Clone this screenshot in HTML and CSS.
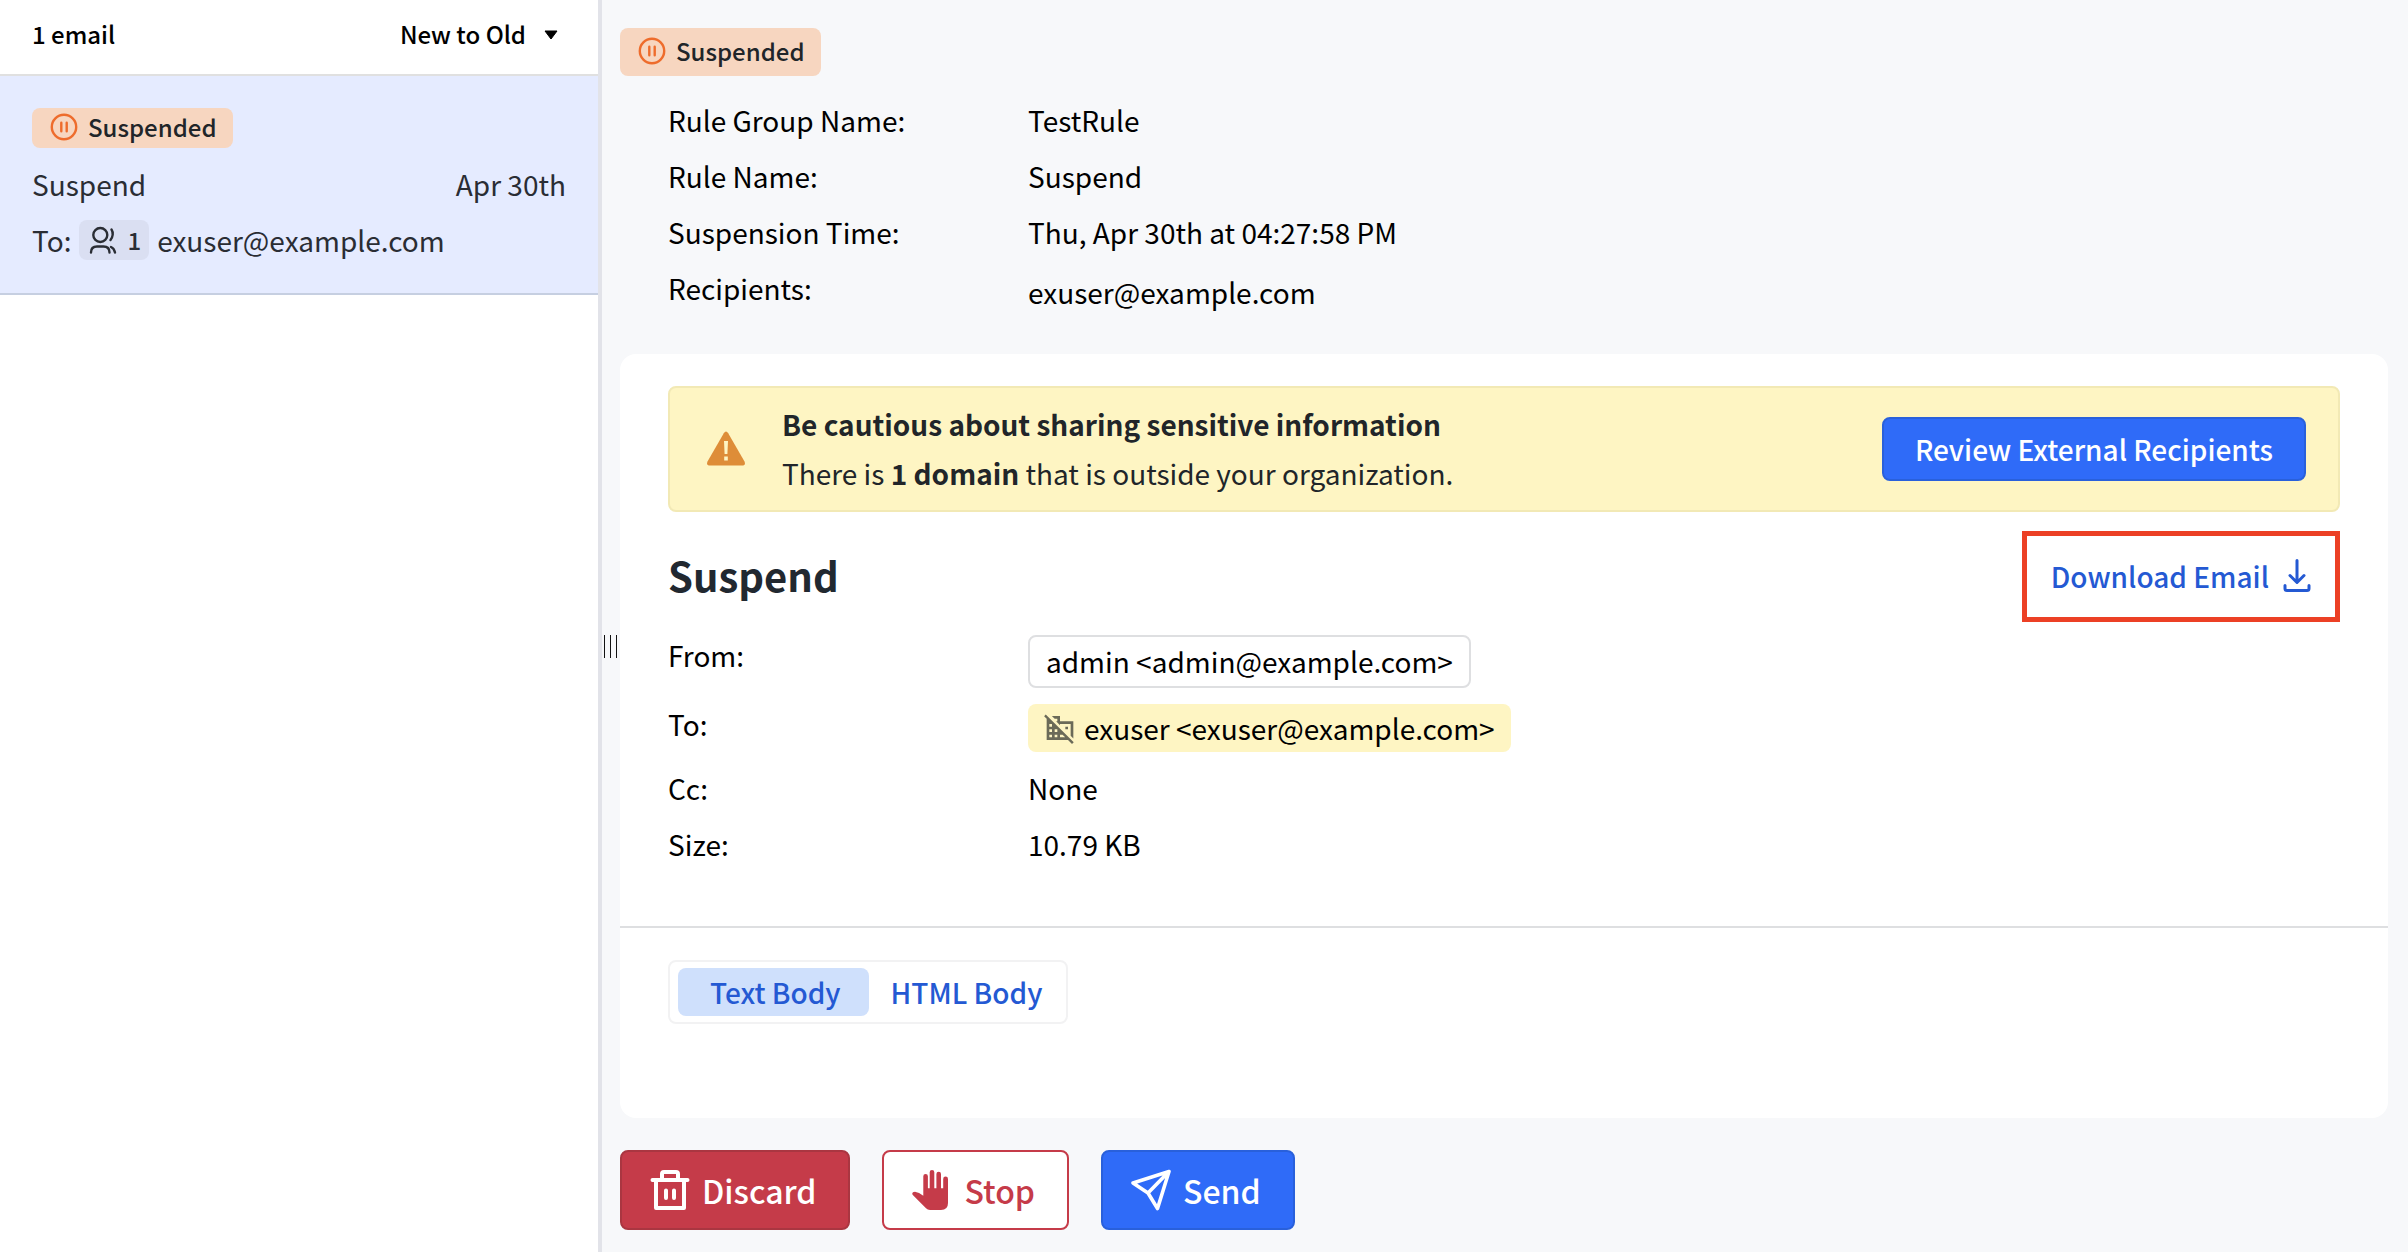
FILE: index.html
```html
<!DOCTYPE html>
<html lang="en">
<head>
<meta charset="utf-8">
<title>Suspended Emails</title>
<link rel="stylesheet" href="styles.css">
</head>
<body>

<div class="layout">
    <aside class="sidebar">
        <div class="listHeader">
            <span>1 email</span>
            <button class="sortButton" type="button">New to Old
                <svg width="14" height="14" viewBox="0 0 14 14"><path d="M1 4h12L7 12z" fill="currentColor" stroke="currentColor" stroke-linejoin="round"/></svg>
            </button>
        </div>
        <div class="emailItem">
            <div class="badge">
                <svg width="28" height="28" viewBox="0 0 28 28" fill="none" stroke="#ee6c2c" stroke-width="2.4" stroke-linecap="round"><circle cx="14" cy="14" r="12.2"/><path d="M11.300 9.800v8.400M16.700 9.800v8.400"/></svg>
                Suspended
            </div>
            <div class="emailRow">
                <span>Suspend</span>
                <span>Apr 30th</span>
            </div>
            <div class="emailTo">
                <span>To:</span>
                <span class="countPill">
                    <svg width="28" height="28" viewBox="0 0 28 28" fill="none" stroke="currentColor" stroke-width="2.4" stroke-linecap="round"><circle cx="11.3" cy="9" r="7"/><path d="M2 26.500c0-3.500 2-6 6-6h6.500c4 0 6 2.500 6 6M22.500 3.500c2 3 1.500 7.500-1 10.500M22 21c2.500 1 3.500 3 4 5.500"/></svg>
                    1
                </span>
                <span>exuser@example.com</span>
            </div>
        </div>
    </aside>

    <div class="resizer"><div class="resizerGrip"></div></div>

    <main class="detail">
        <div class="badge badgeLarge">
            <svg width="28" height="28" viewBox="0 0 28 28" fill="none" stroke="#ee6c2c" stroke-width="2.4" stroke-linecap="round"><circle cx="14" cy="14" r="12.2"/><path d="M11.300 9.800v8.400M16.700 9.800v8.400"/></svg>
            Suspended
        </div>
        <dl class="fields ruleFields">
            <dt>Rule Group Name:</dt><dd>TestRule</dd>
            <dt>Rule Name:</dt><dd>Suspend</dd>
            <dt>Suspension Time:</dt><dd>Thu, Apr 30th at 04:27:58 PM</dd>
            <dt>Recipients:</dt><dd class="recipient">exuser@example.com</dd>
        </dl>

        <section class="card">
            <div class="cardTop">
                <div class="alert">
                    <svg width="40" height="36" viewBox="0 0 40 36"><path d="M17.800 2.200Q20-1 22.200 2.200L38.500 30.500Q40 34.500 36 34.500H4Q0 34.500 1.500 30.500z" fill="#de8d38"/><path d="M18 10h4l-.6 13h-2.800zM18.200 25.500h3.600v4h-3.600z" fill="#fef5c3"/></svg>
                    <div class="alertText">
                        <strong>Be cautious about sharing sensitive information</strong>
                        <p>There is <strong>1 domain</strong> that is outside your organization.</p>
                    </div>
                    <button class="reviewButton" type="button">Review External Recipients</button>
                </div>

                <div class="titleRow">
                    <h1>Suspend</h1>
                    <a class="download" href="#">Download Email
                        <svg width="28" height="34" viewBox="0 0 28 34" fill="none" stroke="currentColor" stroke-width="3" stroke-linecap="round" stroke-linejoin="round"><path d="M14 1.500v21M7 16.500l7 7 7-7M2 26.500v3q0 2 2 2h20q2 0 2-2v-3"/></svg>
                    </a>
                </div>

                <dl class="fields mailFields">
                    <dt>From:</dt><dd><span class="chip">admin &lt;admin@example.com&gt;</span></dd>
                    <dt>To:</dt>
                    <dd><span class="chip chipExternal">
                        <svg width="32" height="32" viewBox="0 0 24 24" fill="#6b6a58"><path d="M8 5h2v2h-.9L12 9.900V9h8v8.900l2 2V7H12V3H5.900L8 5zm8 6h2v2h-2v-2zM1.300 1.800L.1 3.100 2 5v16h16l3 3 1.300-1.300L1.300 1.800zM6 19H4v-2h2v2zm0-4H4v-2h2v2zm-2-4V9h2v2H4zm6 8H8v-2h2v2zm-2-4v-2h2v2H8zm4 4v-2h1.900l2 2H12z"/></svg>
                        exuser &lt;exuser@example.com&gt;</span></dd>
                    <dt>Cc:</dt><dd>None</dd>
                    <dt>Size:</dt><dd>10.79 KB</dd>
                </dl>
            </div>

            <div class="cardBody">
                <div class="tabs">
                    <button class="tab tabActive" type="button">Text Body</button>
                    <button class="tab" type="button">HTML Body</button>
                </div>
            </div>
        </section>

        <div class="actions">
            <button class="action discard" type="button">
                <svg width="40" height="40" viewBox="0 0 40 40" fill="none" stroke="currentColor" stroke-width="4" stroke-linecap="round" stroke-linejoin="round"><path d="M2.500 10h35M6 10v28h28V10M12 10V4q0-2 2-2h12q2 0 2 2v6"/><path d="M16 20.500v7.500M24 20.500v7.500"/></svg>
                Discard
            </button>
            <button class="action stop" type="button">
                <svg width="40" height="40" viewBox="0 0 40 40" fill="currentColor"><path d="M.8 25Q-1 22 3 21.800Q7 22.500 11.300 25.700V6.300a2.300 2.300 0 0 1 4.600 0V18.300h1.800V2.300a2.300 2.300 0 0 1 4.600 0V18.300h2.100V4a2.300 2.300 0 0 1 4.600 0V18.300h2.200V9a2.400 2.400 0 0 1 4.800 0V33q0 7-7 7H18q-2.500 0-4-1.800z"/></svg>
                Stop
            </button>
            <button class="action send" type="button">
                <svg width="40" height="42" viewBox="0 0 40 42" fill="none" stroke="currentColor" stroke-width="3.6" stroke-linejoin="round"><path d="M38 2.500L2 14l15 10 9.500 15.500zM38 2.500L17 24"/></svg>
                Send
            </button>
        </div>
    </main>
</div>

</body>
</html>
```
FILE: styles.css
```css
* {
    box-sizing: border-box;
}

body {
    margin: 0;
    background-color: #f7f8fa;
    color: #000;
    font-family: "Noto Sans CJK SC", "Open Sans", sans-serif;
    font-size: 28px;
    line-height: 40px;
}

button {
    font: inherit;
    cursor: pointer;
}

svg {
    flex: none;
}

.layout {
    display: flex;
    min-height: 100vh;
}

/* left list */
.sidebar {
    flex: none;
    width: 25%;
    background: white;
    border-right: 4px solid #e2e3e9;
}

.listHeader {
    display: flex;
    justify-content: space-between;
    align-items: center;
    height: 76px;
    padding: 0 40px 6px 32px;
    border-bottom: 2px solid #e0e0e0;
    font-size: 24px;
    font-weight: 500;
}

.sortButton {
    display: flex;
    align-items: center;
    gap: 18px;
    padding: 0;
    border: 0;
    background: none;
    color: inherit;
}

.emailItem {
    padding: 32px 32px 33px;
    background: #e5ebff;
    border-bottom: 2px solid #c6cfe1;
    color: #2a2d34;
}

.badge {
    display: flex;
    align-items: center;
    gap: 10px;
    width: fit-content;
    height: 40px;
    padding: 0 16px 2px 18px;
    border-radius: 8px;
    background: #f7d6c0;
    color: #212529;
    font-size: 24px;
    font-weight: 500;
}

.badgeLarge {
    height: 48px;
}

.emailRow {
    display: flex;
    justify-content: space-between;
    margin-top: 16px;
}

.emailTo {
    display: flex;
    align-items: center;
    gap: 8px;
    margin-top: 16px;
}

.countPill {
    display: flex;
    align-items: center;
    gap: 10px;
    padding: 0 8px 0 10px;
    border-radius: 8px;
    background: #dadff2;
    font-size: 24px;
    font-weight: 500;
}

.resizer {
    display: flex;
    align-items: center;
    width: 18px;
    padding: 40px 0 0 2px;
}

.resizerGrip {
    width: 13px;
    height: 23px;
    border: solid #111;
    border-width: 0 1px;
    background: linear-gradient(#111, #111) center / 1px 100% no-repeat;
}

/* right pane */
.detail {
    flex: 1;
    padding: 28px 20px 22px 0;
}

.fields {
    display: grid;
    grid-template-columns: 360px 1fr;
    row-gap: 16px;
    margin: 0;
}

.fields dd {
    display: flex;
    margin: 0;
}

.ruleFields {
    padding: 24px 48px 42px;
}

.fields .recipient {
    padding-top: 4px;
}

.card {
    border-radius: 16px;
    background: white;
}

.cardTop {
    padding: 32px 48px 62px;
    border-bottom: 2px solid #dedfe1;
}

.alert {
    display: flex;
    align-items: center;
    padding: 12px 32px 12px 36px;
    border: 2px solid #f2e9b5;
    border-radius: 8px;
    background: #fef5c3;
    color: #212529;
    line-height: 49px;
}

.alertText {
    flex: 1;
    margin-left: 36px;
}

.alertText p {
    margin: 0;
}

.reviewButton {
    height: 64px;
    padding: 0 31px;
    border: 2px solid #2960db;
    border-radius: 8px;
    background: #2f6bf8;
    color: white;
    font-weight: 500;
}

.titleRow {
    display: flex;
    justify-content: space-between;
    align-items: center;
    margin: 19px 0 13px;
}

.titleRow h1 {
    margin: 0;
    padding-bottom: 4px;
    color: #212830;
    font-size: 40px;
    font-weight: 700;
}

.download {
    display: flex;
    align-items: center;
    gap: 14px;
    height: 91px;
    padding: 0 24px 2px;
    border: 5px solid #ec4025;
    color: #2459d3;
    font-weight: 500;
    text-decoration: none;
}

.chip {
    display: flex;
    align-items: center;
    height: 53px;
    padding: 0 16px 2px;
    border: 2px solid #dedfe1;
    border-radius: 8px;
}

.chipExternal {
    gap: 8px;
    height: 48px;
    padding: 0 16px;
    border: 0;
    background: #fef5c3;
}

.cardBody {
    min-height: 190px;
    padding: 32px 48px;
}

.tabs {
    display: flex;
    width: fit-content;
    padding: 6px 8px;
    border: 2px solid #f2f2f3;
    border-radius: 8px;
}

.tab {
    height: 48px;
    padding: 0 16px 0 22px;
    border: 0;
    border-radius: 8px;
    background: none;
    color: #2459d3;
    font-weight: 500;
}

.tabActive {
    padding: 0 28px 0 32px;
    background: #cfe0fc;
}

.actions {
    display: flex;
    gap: 32px;
    margin-top: 32px;
}

.action {
    display: flex;
    align-items: center;
    gap: 12px;
    height: 80px;
    padding: 0 32px 0 28px;
    border: 2px solid;
    border-radius: 8px;
    color: white;
    font-size: 32px;
    font-weight: 500;
}

.discard {
    background: #c53b49;
    border-color: #aa3641;
}

.stop {
    background: white;
    border-color: #c53b49;
    color: #c53b49;
}

.send {
    background: #2f6bf8;
    border-color: #2960db;
}
```
